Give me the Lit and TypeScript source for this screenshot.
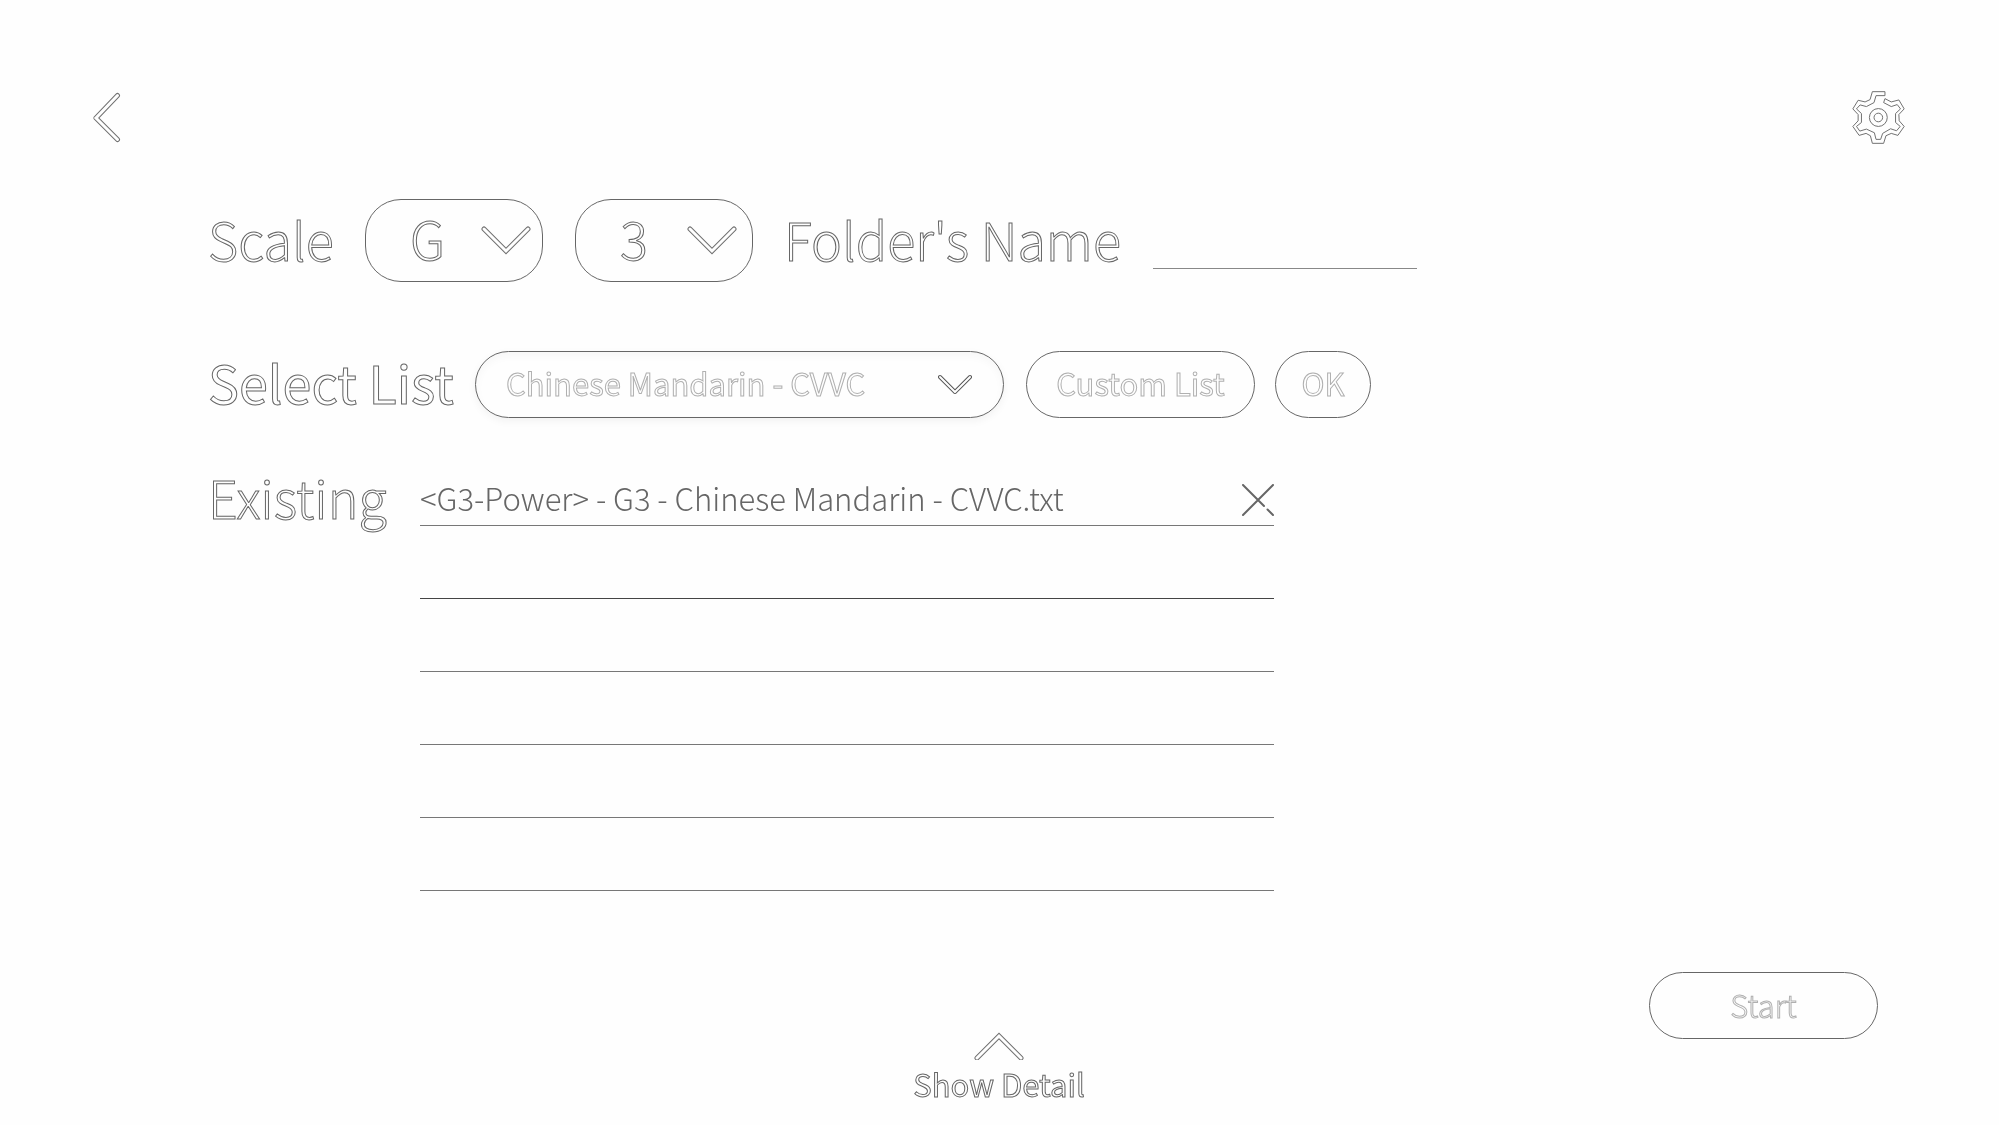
import { LitElement, html, css, svg } from "lit";
import { customElement, state } from "lit/decorators.js";

const chevron = (w: number, h: number, points: string, cls = "") => html`
  <svg class="chevron ${cls}" width=${w} height=${h} viewBox="0 0 ${w} ${h}" aria-hidden="true">
    ${svg`<polyline class="edge" points=${points}/><polyline class="core" points=${points}/>`}
  </svg>`;

@customElement("app-root")
export class AppRoot extends LitElement {
  @state() private files = ["<G3-Power> - G3 - Chinese Mandarin - CVVC.txt", "", "", "", "", ""];

  static styles = css`
    :host {
      display: flex;
      flex-direction: column;
      box-sizing: border-box;
      min-height: 100vh;
      padding: 91px 94px 17px 93px;
      background: #fefefe;
      color: #666;
      font-family: "Noto Sans CJK SC", "Noto Sans", sans-serif;
      font-weight: 300;
      font-size: 31px;
      line-height: 48px;
    }
    .top, .form, .bottom { will-change: transform; }
    button, select, input {
      box-sizing: border-box;
      margin: 0;
      padding: 0;
      border: 0;
      background: none;
      font: inherit;
      color: inherit;
    }
    button, select { cursor: pointer; }
    svg { display: block; }
    .edge, .core { fill: none; stroke-linecap: round; }
    .edge { stroke: #707070; stroke-width: 5; }
    .core { stroke: #fefefe; stroke-width: 3; }
    .small .edge { stroke: #555; stroke-width: 4; }
    .small .core { stroke-width: 2; }
    .top {
      display: flex;
      justify-content: space-between;
      align-items: center;
    }
    .gear { fill: none; stroke: #707070; stroke-width: 3; }
    .form {
      display: flex;
      flex-direction: column;
      padding-left: 115px;
    }
    .row { display: flex; align-items: center; }
    .scale { margin-top: 55px; }
    .lists { margin-top: 62px; }
    .existing { margin-top: 29px; align-items: flex-start; }
    .title {
      padding-bottom: 4px;
      font-size: 52px;
      line-height: 76px;
      color: #fefefe;
      -webkit-text-stroke: 1px #666;
      white-space: nowrap;
    }
    .regular { font-weight: 400; }
    .scale .title { width: 157px; }
    .scale .name { width: 369px; padding-left: 31px; }
    .lists .title { width: 267px; }
    .existing .title { width: 212px; padding-top: 6px; }
    .drop { display: grid; align-items: center; }
    .drop > * { grid-area: 1 / 1; }
    .drop svg { justify-self: end; pointer-events: none; }
    .drop select { appearance: none; }
    .note { margin-right: 32px; }
    .note.last { margin-right: 0; }
    .note select {
      width: 178px;
      height: 83px;
      padding: 0 0 6px 44px;
      border: 1px solid #666;
      border-radius: 36px;
      font-size: 52px;
      color: #fefefe;
      -webkit-text-stroke: 1px #666;
    }
    .note svg { margin-right: 12px; }
    .note.last svg { margin-right: 16px; }
    .folder {
      width: 264px;
      height: 56px;
      border-bottom: 1px solid #888;
    }
    .pill {
      height: 67px;
      padding-bottom: 2px;
      border: 1px solid #666;
      border-radius: 34px;
      color: #fefefe;
      -webkit-text-stroke: 1px #b0b0b0;
    }
    .list { margin-right: 22px; }
    .list select {
      width: 529px;
      padding-left: 30px;
      box-shadow: 0 3px 8px rgba(0, 0, 0, 0.05), inset 0 4px 8px rgba(0, 0, 0, 0.03);
    }
    .list svg { margin-right: 32px; }
    .wide { width: 229px; }
    .ok { width: 96px; margin-left: 20px; }
    .files {
      width: 854px;
      margin: 0;
      padding: 0;
      list-style: none;
    }
    .file {
      display: flex;
      justify-content: space-between;
      align-items: center;
      box-sizing: border-box;
      height: 73px;
      padding-top: 21px;
      border-bottom: 1px solid #777;
      white-space: nowrap;
    }
    .file:nth-child(2) { border-color: #444; }
    .file span { padding-bottom: 4px; }
    .cross { fill: none; stroke: #666; stroke-width: 2; stroke-linecap: round; }
    .bottom {
      display: grid;
      grid-template-columns: 1fr auto 1fr;
      align-items: start;
      margin-top: auto;
    }
    .detail {
      grid-column: 2;
      display: grid;
      justify-items: center;
      padding-top: 58px;
      color: #fefefe;
      -webkit-text-stroke: 1px #666;
    }
    .start { justify-self: end; margin-right: 27px; }
  `;

  private remove(index: number) {
    this.files = this.files.map((f, i) => (i === index ? "" : f));
  }

  render() {
    return html`
      <header class="top">
        <button aria-label="Back">
          <svg width="28" height="52" viewBox="0 0 28 52" aria-hidden="true">
            <polyline class="edge" stroke-linejoin="round" points="24.500,3.500 3,26 24.500,47.500"/>
            <polyline class="core" points="24.500,3.500 3,26 24.500,47.500"/>
          </svg>
        </button>
        <button aria-label="Settings">
          <svg class="gear" width="53" height="53" viewBox="95 62 159 160" aria-hidden="true">
            <path d="M194 64H156L149 88 134 95 113 90 97 116 113 133V152L97 169 116 196 137 190 150 197 156 220H190L197 197 213 190 233 196 252 169 237 152 236 133 252 116 236 89 213 95 194 85 190 97 213 109 231 103 241 116 226 130V157L240 169 229 182 211 176 187 190 181 208H167L162 188 138 177 118 183 108 169 123 157V130L108 116 119 104 138 109 161 97 167 76H194Z"/>
            <circle cx="174" cy="142" r="27"/>
            <circle cx="174" cy="142" r="13"/>
          </svg>
        </button>
      </header>
      <main class="form">
        <div class="row scale">
          <label class="title" for="note">Scale</label>
          <div class="drop note">
            <select id="note"><option>G</option><option>A</option><option>B</option></select>
            ${chevron(50, 30, "3,3 25,25 47,3")}
          </div>
          <div class="drop note last">
            <select id="octave" aria-label="Octave"><option>3</option><option>4</option><option>5</option></select>
            ${chevron(50, 30, "3,3 25,25 47,3")}
          </div>
          <label class="title name" for="folder">Folder's Name</label>
          <input class="folder" id="folder" type="text">
        </div>
        <div class="row lists">
          <label class="title regular" for="list">Select List</label>
          <div class="drop list">
            <select class="pill regular" id="list">
              <option>Chinese Mandarin - CVVC</option>
            </select>
            ${chevron(34, 20, "2,3 17,18 32,3", "small")}
          </div>
          <button class="pill regular wide">Custom List</button>
          <button class="pill regular ok">OK</button>
        </div>
        <div class="row existing">
          <span class="title" id="existing">Existing</span>
          <ul class="files" aria-labelledby="existing">
            ${this.files.map((f, i) => html`
              <li class="file">
                ${f
                  ? html`<span>${f}</span>
                      <button aria-label="Remove" @click=${() => this.remove(i)}>
                        <svg class="cross" width="32" height="32" viewBox="0 0 32 32" aria-hidden="true">
                          <path d="M31 1 1 31M1 1 22 22M25.500 25.500 31 31"/>
                        </svg>
                      </button>`
                  : ""}
              </li>`)}
          </ul>
        </div>
      </main>
      <footer class="bottom">
        <button class="detail regular">
          ${chevron(50, 30, "3,28 25,6 47,28")}
          <span>Show Detail</span>
        </button>
        <button class="pill wide start">Start</button>
      </footer>
    `;
  }
}
